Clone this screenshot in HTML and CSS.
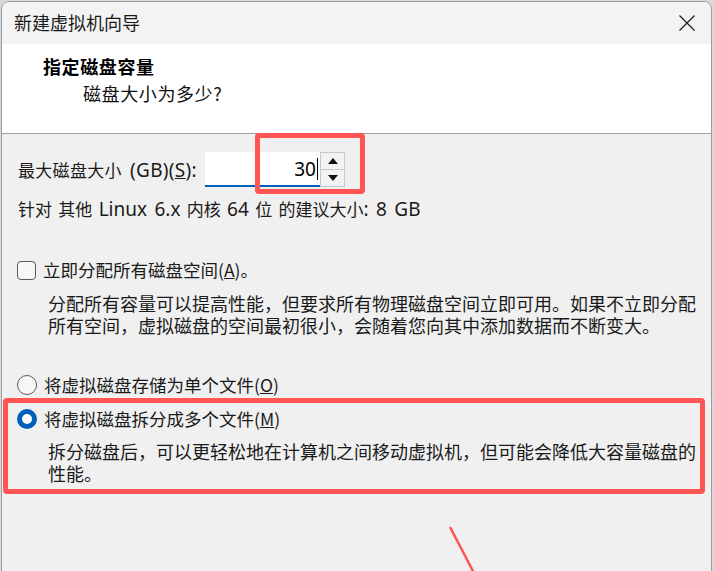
FILE: index.html
```html
<!DOCTYPE html>
<html lang="zh-CN">
<head>
<meta charset="utf-8">
<title>新建虚拟机向导</title>
<link rel="stylesheet" href="styles.css">
</head>
<body>
<div class="window">
  <div class="titlebar">
    <span class="title">新建虚拟机向导</span>
    <svg class="close" width="16" height="16" viewBox="0 0 16 16"><path d="M0.5 0.5 L15.5 15.5 M15.5 0.5 L0.5 15.5" stroke="#1a1a1a" stroke-width="1.2" fill="none"/></svg>
  </div>
  <div class="header">
    <div class="h-title">指定磁盘容量</div>
    <div class="h-sub">磁盘大小为多少?</div>
  </div>
  <div class="content">
    <div class="size-row">
      <label class="size-label">最大磁盘大小<span class="en"> (GB)(<u>S</u>):</span></label>
      <div class="spin">
        <div class="spin-input"><span class="spin-val">30</span><span class="caret"></span></div>
        <div class="spin-btns">
          <div class="spin-btn"><svg width="10" height="6" viewBox="0 0 10 6"><path d="M0 6 L5 0 L10 6 Z" fill="#111"/></svg></div>
          <div class="spin-btn"><svg width="10" height="6" viewBox="0 0 10 6"><path d="M0 0 L5 6 L10 0 Z" fill="#111"/></svg></div>
        </div>
      </div>
    </div>
    <div class="recommend">针对 其他 <span class="en">Linux 6.x</span> 内核 <span class="en">64</span> 位 的建议大小<span class="en">: 8 GB</span></div>

    <div class="opt check-row">
      <span class="checkbox"></span>
      <span class="opt-label">立即分配所有磁盘空间(<u>A</u>)。</span>
    </div>
    <div class="desc">分配所有容量可以提高性能，但要求所有物理磁盘空间立即可用。如果不立即分配<br>所有空间，虚拟磁盘的空间最初很小，会随着您向其中添加数据而不断变大。</div>

    <div class="opt radio-row first">
      <span class="radio"></span>
      <span class="opt-label">将虚拟磁盘存储为单个文件(<u>O</u>)</span>
    </div>
    <div class="opt radio-row second">
      <span class="radio checked"></span>
      <span class="opt-label">将虚拟磁盘拆分成多个文件(<u>M</u>)</span>
    </div>
    <div class="desc desc2">拆分磁盘后，可以更轻松地在计算机之间移动虚拟机，但可能会降低大容量磁盘的<br>性能。</div>
  </div>
</div>

<div class="mark mark-size"></div>
<div class="mark mark-split"></div>
<svg class="pointer" width="40" height="50" viewBox="0 0 40 50"><path d="M2 2 L26 48" stroke="#ff5555" stroke-width="2.5" fill="none"/></svg>
</body>
</html>
```

FILE: styles.css
```css
html, body {
  margin: 0;
  padding: 0;
}
body {
  background: #d9d9d9;
  width: 714px;
  height: 571px;
  overflow: hidden;
  position: relative;
  font-family: "Noto Sans", "Noto Sans CJK SC", sans-serif;
  color: #1a1a1a;
}
.window {
  margin: 1px 0 0 1px;
  width: 709px;
  height: 600px;
  border: 1px solid #9c9c9c;
  border-radius: 8px 8px 0 0;
  overflow: hidden;
  background: #f0f0f0;
}
.titlebar {
  height: 42px;
  background: #f3f3f3;
  display: flex;
  align-items: center;
  justify-content: space-between;
  padding: 0 16px 0 12px;
}
.title {
  font-family: "Noto Sans CJK SC", sans-serif;
  font-size: 18px;
  color: #1a1a1a;
  line-height: 22px;
  margin-top: -2px;
}
.close {
  display: block;
  margin-top: -1px;
}
.header {
  height: 89px;
  background: #ffffff;
  border-bottom: 1px solid #a0a0a0;
  box-sizing: content-box;
}
.h-title {
  font-family: "Noto Sans CJK SC", serif;
  font-weight: bold;
  font-size: 18px;
  line-height: 22px;
  padding: 11px 0 0 41px;
  letter-spacing: 0.6px;
  color: #000;
}
.h-sub {
  font-family: "Noto Sans CJK SC", serif;
  font-size: 18px;
  line-height: 22px;
  padding: 5px 0 0 81px;
  letter-spacing: 0.6px;
  color: #111;
}
.content {
  padding: 0 0 0 16px;
}
.size-row {
  display: flex;
  align-items: center;
  margin-top: 18px;
  height: 35px;
}
.size-label {
  font-family: "Noto Sans CJK SC", sans-serif;
  font-size: 17px;
  line-height: 22px;
  width: 187px;
  white-space: nowrap;
  word-spacing: 3px;
  letter-spacing: 0.3px;
}
.en {
  font-family: "Noto Sans", sans-serif;
  font-size: 19px;
}
.spin {
  display: flex;
  height: 35px;
}
.spin-input {
  width: 113px;
  height: 33px;
  background: #fff;
  border-bottom: 2px solid #005fb8;
  display: flex;
  align-items: center;
  justify-content: flex-end;
  padding-right: 2px;
  box-sizing: content-box;
}
.spin-val {
  font-size: 19px;
  line-height: 22px;
  color: #000;
}
.caret {
  width: 1px;
  height: 22px;
  background: #000;
  margin-left: 1px;
}
.spin-btns {
  width: 25px;
  height: 35px;
  display: flex;
  flex-direction: column;
  border: 1px solid #c8c8c8;
  box-sizing: border-box;
  background: #f3f3f3;
}
.spin-btn {
  flex: 1;
  display: flex;
  align-items: center;
  justify-content: center;
}
.spin-btn + .spin-btn {
  border-top: 1px solid #c8c8c8;
}
.recommend {
  font-family: "Noto Sans CJK SC", sans-serif;
  font-size: 17px;
  line-height: 22px;
  margin-top: 11px;
  white-space: nowrap;
  word-spacing: 2.5px;
}
.opt {
  display: flex;
  align-items: center;
  gap: 7px;
  height: 22px;
}
.opt-label {
  font-family: "Noto Sans CJK SC", sans-serif;
  font-size: 17.5px;
  line-height: 22px;
}
.check-row {
  margin-top: 39px;
}
.checkbox {
  width: 19px;
  height: 19px;
  border: 1px solid #5a5a5a;
  border-radius: 4px;
  box-sizing: border-box;
  background: #f7f7f7;
  margin-left: -1px;
}
.desc {
  font-family: "Noto Sans CJK SC", serif;
  font-size: 18px;
  line-height: 22px;
  padding-left: 30px;
  margin-top: 11px;
  color: #1a1a1a;
  white-space: nowrap;
}
.radio-row.first {
  margin-top: 38px;
}
.radio-row.second {
  margin-top: 12px;
}
.radio {
  width: 20px;
  height: 20px;
  border: 1px solid #5a5a5a;
  border-radius: 50%;
  box-sizing: border-box;
  background: #f7f7f7;
  margin-left: -1px;
}
.radio.checked {
  border: 5px solid #005fb8;
  background: #fff;
}
.desc2 {
  margin-top: 10px;
}
.mark {
  position: absolute;
  border: 5px solid #ff5555;
  border-radius: 4px;
  box-sizing: border-box;
}
.mark-size {
  left: 255px;
  top: 133px;
  width: 110px;
  height: 61px;
}
.mark-split {
  left: 3px;
  top: 398px;
  width: 702px;
  height: 96px;
}
.pointer {
  position: absolute;
  left: 448px;
  top: 525px;
}
```
